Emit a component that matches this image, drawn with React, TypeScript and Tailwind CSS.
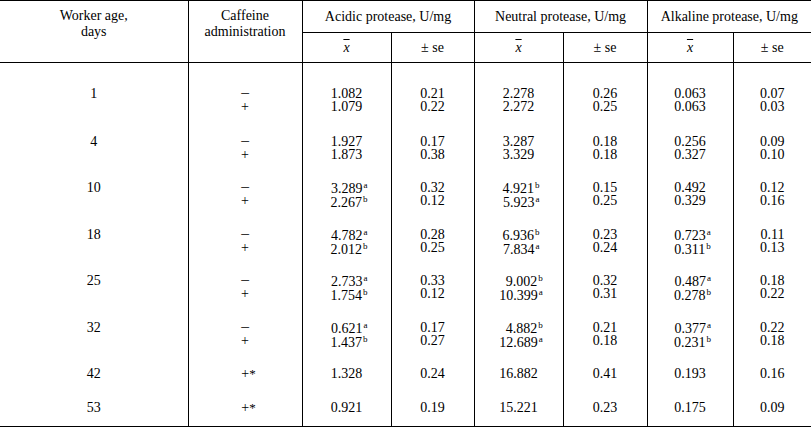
import React from 'react'

// Each line: caffeine, acidic x, acidic se, neutral x, neutral se, alkaline x, alkaline se
const groups: { age: string; lines: string[][] }[] = [
  {
    age: '1',
    lines: [
      ['−', '1.082', '0.21', '2.278', '0.26', '0.063', '0.07'],
      ['+', '1.079', '0.22', '2.272', '0.25', '0.063', '0.03'],
    ],
  },
  {
    age: '4',
    lines: [
      ['−', '1.927', '0.17', '3.287', '0.18', '0.256', '0.09'],
      ['+', '1.873', '0.38', '3.329', '0.18', '0.327', '0.10'],
    ],
  },
  {
    age: '10',
    lines: [
      ['−', '3.289^a', '0.32', '4.921^b', '0.15', '0.492', '0.12'],
      ['+', '2.267^b', '0.12', '5.923^a', '0.25', '0.329', '0.16'],
    ],
  },
  {
    age: '18',
    lines: [
      ['−', '4.782^a', '0.28', '6.936^b', '0.23', '0.723^a', '0.11'],
      ['+', '2.012^b', '0.25', '7.834^a', '0.24', '0.311^b', '0.13'],
    ],
  },
  {
    age: '25',
    lines: [
      ['−', '2.733^a', '0.33', '9.002^b', '0.32', '0.487^a', '0.18'],
      ['+', '1.754^b', '0.12', '10.399^a', '0.31', '0.278^b', '0.22'],
    ],
  },
  {
    age: '32',
    lines: [
      ['−', '0.621^a', '0.17', '4.882^b', '0.21', '0.377^a', '0.22'],
      ['+', '1.437^b', '0.27', '12.689^a', '0.18', '0.231^b', '0.18'],
    ],
  },
  { age: '42', lines: [['+^*', '1.328', '0.24', '16.882', '0.41', '0.193', '0.16']] },
  { age: '53', lines: [['+^*', '0.921', '0.19', '15.221', '0.23', '0.175', '0.09']] },
]

// row heights so each group's first line lands where the print has it
const rowHeights = ['h-[72px]', 'h-[46px]', 'h-[47px]', 'h-[46px]', 'h-[47px]', 'h-[46px]', 'h-[34px]', 'h-[26px]']

function Value({ text }: { text: string }) {
  const [num, sup] = text.split('^')
  if (num === '−') return <span className="text-[17px] leading-[13px]">−</span>
  return (
    <span className="whitespace-nowrap">
      {num}
      {sup && (
        <span className={sup === '*' ? 'text-[13px] -mr-[7px]' : 'text-[9px] align-[5px] leading-none ml-px -mr-[5px]'}>
          {sup}
        </span>
      )}
    </span>
  )
}

function Xbar() {
  return <span className="italic overline">x</span>
}

export default function App() {
  return (
    <div className="w-[811px] h-[428px] bg-white text-black font-['Liberation_Serif',serif] text-[14px]">
      <table className="w-[811px] table-fixed border-collapse">
        <colgroup>
          <col className="w-[188px]" />
          <col className="w-[114px]" />
          <col className="w-[89px]" />
          <col className="w-[83px]" />
          <col className="w-[89px]" />
          <col className="w-[84px]" />
          <col className="w-[86px]" />
          <col className="w-[78px]" />
        </colgroup>
        <thead>
          <tr className="h-[32px] border-t border-black">
            <th rowSpan={2} className="align-top pt-[7px] font-normal leading-[16px] border-b border-black">
              Worker age,
              <br />
              days
            </th>
            <th rowSpan={2} className="align-top pt-[7px] font-normal leading-[16px] border-l border-b border-black">
              Caffeine
              <br />
              administration
            </th>
            {['Acidic protease, U/mg', 'Neutral protease, U/mg', 'Alkaline protease, U/mg'].map((t) => (
              <th key={t} colSpan={2} className="font-normal leading-[16px] pt-px border-l border-b border-black whitespace-nowrap">
                {t}
              </th>
            ))}
          </tr>
          <tr className="h-[30px]">
            {[0, 1, 2].map((i) => (
              <React.Fragment key={i}>
                <th className="font-normal border-l border-b border-black">
                  <Xbar />
                </th>
                <th className="font-normal border-l border-b border-black">± se</th>
              </React.Fragment>
            ))}
          </tr>
        </thead>
        <tbody>
          {groups.map((g, gi) => (
            <tr key={g.age} className={`${rowHeights[gi]} ${gi === groups.length - 1 ? 'border-b-[1.5px] border-black' : ''}`}>
              <td className={`align-top text-center leading-[13px] ${gi === 0 ? 'pt-[24px]' : ''}`}>{g.age}</td>
              {[0, 1, 2, 3, 4, 5, 6].map((c) => (
                <td
                  key={c}
                  className={`align-top text-center border-l border-black leading-[13px] ${gi === 0 ? 'pt-[24px]' : ''}`}
                >
                  <div className={`inline-flex flex-col ${c === 0 ? 'items-center' : 'items-end'}`}>
                    {g.lines.map((line, li) => (
                      <Value key={li} text={line[c]} />
                    ))}
                  </div>
                </td>
              ))}
            </tr>
          ))}
        </tbody>
      </table>
    </div>
  )
}
